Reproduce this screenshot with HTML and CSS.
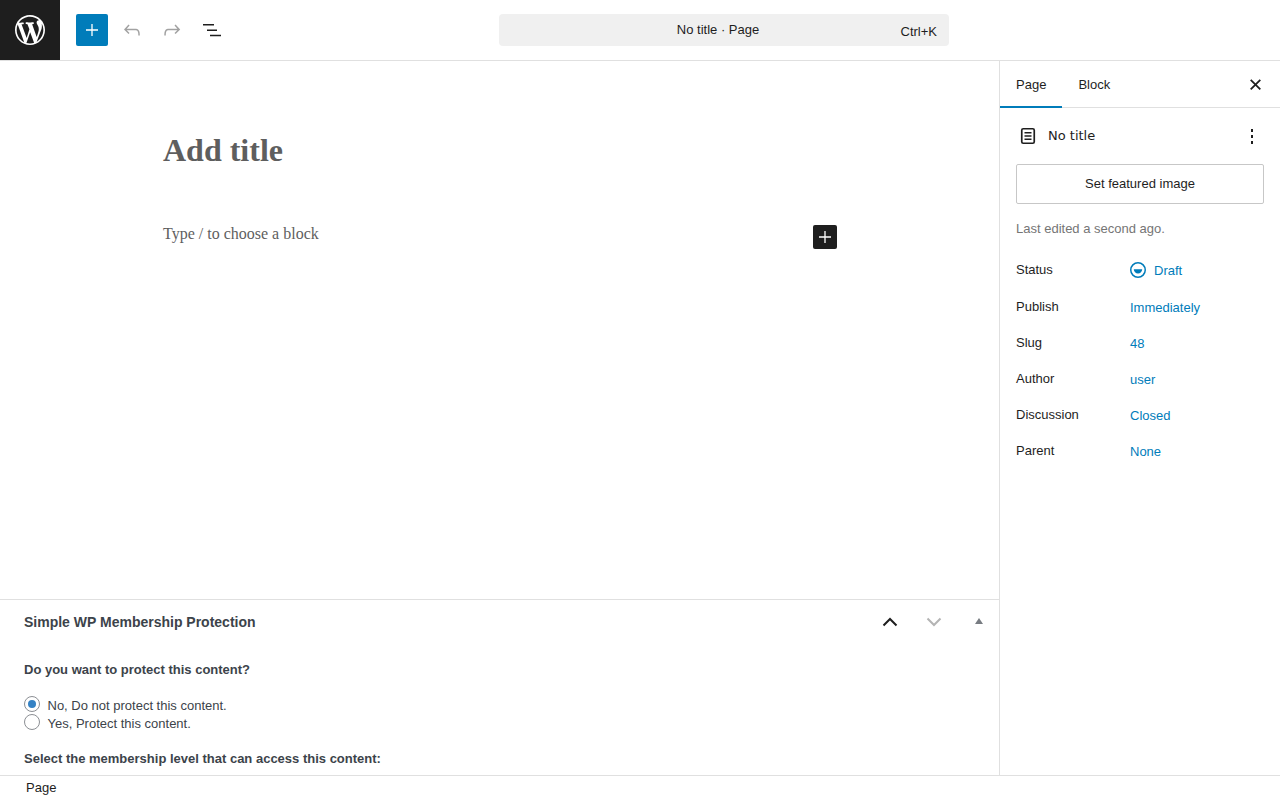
FILE: index.html
```html
<!DOCTYPE html>
<html lang="en">
<head>
<meta charset="utf-8">
<title>Edit Page</title>
<link rel="stylesheet" href="styles.css">
</head>
<body>
<div class="app">
  <header class="topbar">
    <a class="wp-logo">
      <svg width="36" height="36" viewBox="-2 -2 24 24" fill="#fff"><path d="M20 10c0-5.510-4.490-10-10-10C4.480 0 0 4.490 0 10c0 5.520 4.480 10 10 10 5.510 0 10-4.480 10-10zM7.780 15.370L4.370 6.220c.55-.02 1.170-.08 1.170-.08.5-.06.44-1.130-.06-1.110 0 0-1.450.11-2.370.11-.18 0-.37 0-.58-.01C4.120 2.690 6.870 1.110 10 1.110c2.330 0 4.450.87 6.050 2.340-.68-.11-1.650.39-1.650 1.580 0 .74.450 1.360.9 2.100.35.61.55 1.360.55 2.460 0 1.490-1.400 5-1.400 5l-3.030-8.370c.54-.02.82-.17.82-.17.5-.05.44-1.250-.06-1.220 0 0-1.440.12-2.380.12-.87 0-2.330-.12-2.330-.12-.5-.03-.56 1.200-.06 1.220l.92.080 1.260 3.410zM17.410 10c.24-.64.74-1.870.43-4.250.7 1.290 1.050 2.710 1.050 4.250 0 3.290-1.730 6.240-4.400 7.780.97-2.590 1.940-5.200 2.920-7.780zM6.100 18.090C3.120 16.650 1.110 13.530 1.110 10c0-1.300.23-2.480.72-3.590C3.250 10.300 4.670 14.200 6.100 18.090zm4.030-6.630l2.580 6.980c.02.04.04.08.06.11-.87.3-1.790.45-2.770.45-.82 0-1.620-.11-2.370-.33.81-2.380 1.620-4.740 2.500-7.210z"/></svg>
    </a>
    <div class="tools">
      <button class="tool tool-add">
        <svg width="24" height="24" viewBox="0 0 24 24" fill="#fff"><path d="M18 11.350h-5.350V6h-1.300v5.350H6v1.300h5.350V18h1.300v-5.350H18z"/></svg>
      </button>
      <button class="tool">
        <svg width="24" height="24" viewBox="0 0 24 24" fill="#a2a2a2"><path d="M18.300 11.700c-.6-.6-1.400-.9-2.300-.9H6.700l2.900-3.300-1.100-1-4.500 5L8.500 16l1-1-2.700-2.700H16c.5 0 .9.200 1.300.5 1 1 1 3.400 1 4.500v.3h1.500v-.2c0-1.500 0-4.300-1.500-5.700z"/></svg>
      </button>
      <button class="tool">
        <svg width="24" height="24" viewBox="0 0 24 24" fill="#a2a2a2"><path d="M15.600 6.500l-1.100 1 2.900 3.300H8c-.9 0-1.700.3-2.300.9-1.400 1.500-1.400 4.200-1.400 5.600v.2h1.500v-.3c0-1.100 0-3.500 1-4.500.3-.3.700-.5 1.300-.5h9.200L14.500 15l1.100 1.100 4.600-4.600-4.600-5z"/></svg>
      </button>
      <button class="tool">
        <svg width="24" height="24" viewBox="0 0 24 24" fill="#1e1e1e"><path d="M3 6h11v1.500H3zM7 11.500h10V13H7zM10 16.750h11v1.500H10z"/></svg>
      </button>
    </div>
    <div class="center">
      <div class="command">
        <span class="command-title">No title · Page</span>
        <span class="command-key">Ctrl+K</span>
      </div>
    </div>
  </header>

  <div class="main">
    <div class="content">
      <div class="canvas">
        <div class="doc">
          <h1 class="doc-title">Add title</h1>
          <div class="doc-block">
            <p class="doc-hint">Type / to choose a block</p>
            <button class="inline-add">
              <svg width="24" height="24" viewBox="0 0 24 24" fill="#fff"><path d="M18 11.350h-5.350V6h-1.300v5.350H6v1.300h5.350V18h1.300v-5.350H18z"/></svg>
            </button>
          </div>
        </div>
      </div>
      <section class="metabox">
        <div class="metabox-head">
          <h2 class="metabox-title">Simple WP Membership Protection</h2>
          <div class="metabox-ctrls">
            <span class="ctrl ctrl-up"><svg width="16" height="10" viewBox="0 0 16 10" fill="none" stroke="#1e1e1e" stroke-width="2"><path d="M1.500 8.500L8 2l6.500 6.500"/></svg></span>
            <span class="ctrl ctrl-down"><svg width="16" height="10" viewBox="0 0 16 10" fill="none" stroke="#b4b4b4" stroke-width="2"><path d="M1.500 1.500L8 8l6.500-6.500"/></svg></span>
            <span class="ctrl ctrl-toggle"></span>
          </div>
        </div>
        <div class="metabox-body">
          <p class="q q-first">Do you want to protect this content?</p>
          <label class="opt"><input type="radio" name="p" checked><span>No, Do not protect this content.</span></label>
          <label class="opt"><input type="radio" name="p"><span>Yes, Protect this content.</span></label>
          <p class="q q-second">Select the membership level that can access this content:</p>
        </div>
      </section>
    </div>

    <aside class="sidebar">
      <div class="tabs">
        <button class="tab tab-active">Page</button>
        <button class="tab">Block</button>
        <button class="close">
          <svg width="24" height="24" viewBox="0 0 24 24" fill="none" stroke="#1e1e1e" stroke-width="1.800"><path d="M6.700 6.800l9.600 9.600M16.300 6.800l-9.600 9.600"/></svg>
        </button>
      </div>
      <div class="panel">
        <div class="summary">
          <svg class="summary-icon" width="24" height="24" viewBox="0 0 24 24" fill="none" stroke="#1e1e1e" stroke-width="1.700"><rect x="5.750" y="4.750" width="12.500" height="14.500" rx="1.500"/><path d="M8.500 8.700h7M8.500 12h7M8.500 15.300h7" stroke-width="1.500"/></svg>
          <span class="summary-title">No title</span>
          <span class="dots"><i></i><i></i><i></i></span>
        </div>
        <button class="featured">Set featured image</button>
        <p class="edited">Last edited a second ago.</p>
        <dl class="rows">
          <div class="row row-status"><dt>Status</dt><dd><svg class="status-icon" width="16" height="16" viewBox="0 0 16 16"><circle cx="8" cy="8" r="7.250" fill="none" stroke="#007cba" stroke-width="1.500"/><path d="M3.800 7.200h8.400a4.200 4.200 0 0 1-8.400 0z" fill="#007cba"/></svg><span>Draft</span></dd></div>
          <div class="row"><dt>Publish</dt><dd>Immediately</dd></div>
          <div class="row"><dt>Slug</dt><dd>48</dd></div>
          <div class="row"><dt>Author</dt><dd>user</dd></div>
          <div class="row"><dt>Discussion</dt><dd>Closed</dd></div>
          <div class="row"><dt>Parent</dt><dd>None</dd></div>
        </dl>
      </div>
    </aside>
  </div>

  <footer class="footer">Page</footer>
</div>
</body>
</html>
```
FILE: styles.css
```css
* { box-sizing: border-box; }
html, body { margin: 0; height: 100%; overflow: hidden; }
body { font: 13px/1.4 "Liberation Sans", Arial, sans-serif; color: #1e1e1e; background: #fff; }
button { font: inherit; background: none; border: 0; padding: 0; color: inherit; }
p, h1, h2, dl, dd { margin: 0; }

.app { display: flex; flex-direction: column; height: 800px; }

.topbar { display: flex; align-items: center; height: 61px; flex: none; border-bottom: 1px solid #e0e0e0; }
.wp-logo { width: 60px; height: 60px; background: #1e1e1e; display: flex; align-items: center; justify-content: center; flex: none; }
.tools { display: flex; align-items: center; gap: 8px; margin-left: 16px; width: 423px; flex: none; }
.tool { width: 32px; height: 32px; display: flex; align-items: center; justify-content: center; border-radius: 2px; }
.tool-add { background: #007cba; }
.center { flex: none; }
.command { width: 450px; height: 32px; background: #f0f0f0; border-radius: 4px; display: flex; align-items: center; position: relative; padding: 0 12px; }
.command-title { width: 100%; text-align: center; padding-right: 12px; }
.command-key { position: absolute; right: 12px; top: 9px; line-height: 18px; color: #1e1e1e; }

.main { display: flex; flex: 1; min-height: 0; }
.content { flex: 1; min-width: 0; display: flex; flex-direction: column; }
.canvas { flex: 1; min-height: 0; }
.doc { width: 674px; margin-left: 163px; padding-top: 66px; }
.doc-title { font: 700 32px/46px "Liberation Serif", "Times New Roman", serif; color: #5e5e5e; height: 46px; }
.doc-block { display: flex; justify-content: space-between; margin-top: 46px; }
.doc-hint { font: 16px/28px "Liberation Serif", "Times New Roman", serif; color: #5e5e5e; margin-top: 1px; }
.inline-add { width: 24px; height: 24px; background: #1e1e1e; border-radius: 2px; margin-top: 6px; }
.inline-add svg { display: block; }

.metabox { height: 176px; flex: none; border-top: 1px solid #e0e0e0; color: #3c434a; overflow: hidden; }
.metabox-head { height: 44px; display: flex; align-items: center; justify-content: space-between; padding-left: 24px; }
.metabox-title { font-size: 14px; font-weight: 700; line-height: 44px; }
.metabox-ctrls { display: flex; align-items: center; }
.ctrl { width: 44px; height: 44px; display: flex; align-items: center; justify-content: center; }
.ctrl-toggle { width: 43px; padding-left: 3px; }
.ctrl-toggle::after { content: ""; width: 0; height: 0; border-left: 4px solid transparent; border-right: 4px solid transparent; border-bottom: 6px solid #787c82; margin-top: -2px; }
.metabox-body { padding: 0 24px; }
.q { font-weight: 700; line-height: 18px; }
.q-first { margin-top: 17px; margin-bottom: 16px; }
.q-second { margin-top: 19px; }
.opt { display: flex; align-items: center; height: 18px; gap: 7.5px; }
.opt span { position: relative; top: 2px; }
.opt input { appearance: none; width: 16px; height: 16px; margin: 0; border: 1px solid #8c8f94; border-radius: 50%; background: #fff; flex: none; position: relative; }
.opt input:checked::before { content: ""; position: absolute; left: 3px; top: 3px; width: 8px; height: 8px; border-radius: 50%; background: #3582c4; }

.sidebar { width: 281px; flex: none; border-left: 1px solid #e0e0e0; }
.tabs { display: flex; align-items: center; height: 47px; border-bottom: 1px solid #e0e0e0; position: relative; }
.tab { height: 47px; padding: 0 16px; line-height: 47px; }
.tab-active { box-shadow: inset 0 -2px 0 #007cba; }
.close { position: absolute; right: 12px; top: 12px; width: 24px; height: 24px; }
.close svg { display: block; }
.panel { padding: 0 16px; }
.summary { display: flex; align-items: center; height: 24px; margin-top: 16px; }
.summary-icon { flex: none; margin-right: 8px; }
.summary-title { font-family: "DejaVu Sans", sans-serif; font-size: 13px; flex: 1; }
.dots { display: flex; flex-direction: column; gap: 3px; align-items: center; width: 24px; }
.dots i { width: 2px; height: 3px; background: #1e1e1e; }
.featured { width: 100%; height: 40px; margin-top: 16px; border: 1px solid #c7c7c7; display: block; border-radius: 2px; text-align: center; }
.edited { color: #757575; margin-top: 16px; line-height: 18px; }
.rows { margin-top: 22px; }
.row { display: flex; height: 36px; }
.row-status { height: 38px; padding-top: 1px; }
.row dt { width: 114px; flex: none; color: #1e1e1e; line-height: 18px; }
.row dd { color: #007cba; line-height: 18px; padding-top: 1px; display: flex; align-items: center; gap: 8px; height: 19px; }
.status-icon { margin-bottom: 2px; }

.footer { height: 25px; flex: none; border-top: 1px solid #e0e0e0; padding-left: 26px; line-height: 23px; background: #fff; }
```
